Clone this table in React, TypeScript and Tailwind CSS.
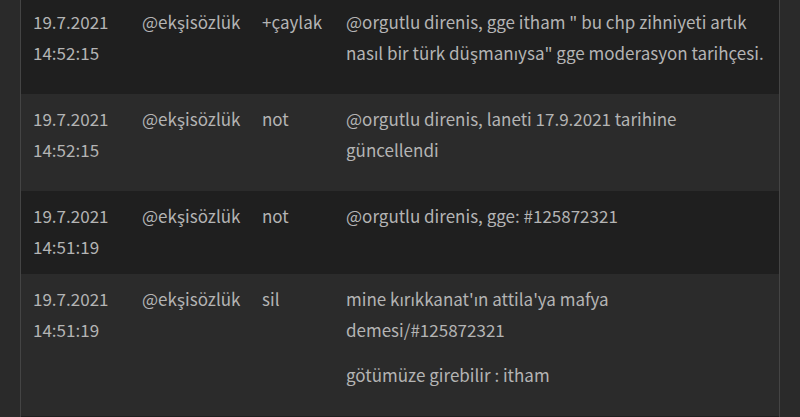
const rows = [
  {
    date: '19.7.2021',
    time: '14:52:15',
    user: '@ekşisözlük',
    action: '+çaylak',
    notes: ['@orgutlu direnis, gge itham " bu chp zihniyeti artık nasıl bir türk düşmanıysa" gge moderasyon tarihçesi.'],
  },
  {
    date: '19.7.2021',
    time: '14:52:15',
    user: '@ekşisözlük',
    action: 'not',
    notes: ['@orgutlu direnis, laneti 17.9.2021 tarihine güncellendi'],
  },
  {
    date: '19.7.2021',
    time: '14:51:19',
    user: '@ekşisözlük',
    action: 'not',
    notes: ['@orgutlu direnis, gge: #125872321'],
  },
  {
    date: '19.7.2021',
    time: '14:51:19',
    user: '@ekşisözlük',
    action: 'sil',
    notes: ["mine kırıkkanat'ın attila'ya mafya demesi/#125872321", 'götümüze girebilir : itham'],
  },
];

export default function App() {
  return (
    <div
      className="h-[417px] overflow-hidden bg-[#2a2a2a] px-5 text-[17px] leading-[31px] text-[#b4b4b4]"
      style={{ fontFamily: '"Noto Sans CJK SC", "Noto Sans", sans-serif' }}
    >
      <div className="mt-[-3px] min-h-[430px] border-x border-[#444444]">
        {rows.map((row, i) => (
          <div
            key={i}
            className={`grid grid-cols-[121px_120px_84px_1fr] pt-[9px] pb-[12px] ${
              i % 2 === 0 ? 'bg-[#1f1f1f]' : 'bg-[#2b2b2b]'
            }`}
          >
            <div className="pl-3">
              <div>{row.date}</div>
              <div>{row.time}</div>
            </div>
            <div>{row.user}</div>
            <div>{row.action}</div>
            <div className="pr-[8px]">
              {row.notes.map((n, j) => (
                <p key={j} className="mb-[14px]">
                  {n}
                </p>
              ))}
            </div>
          </div>
        ))}
        <div className="h-8 bg-[#1f1f1f]" />
      </div>
    </div>
  );
}
